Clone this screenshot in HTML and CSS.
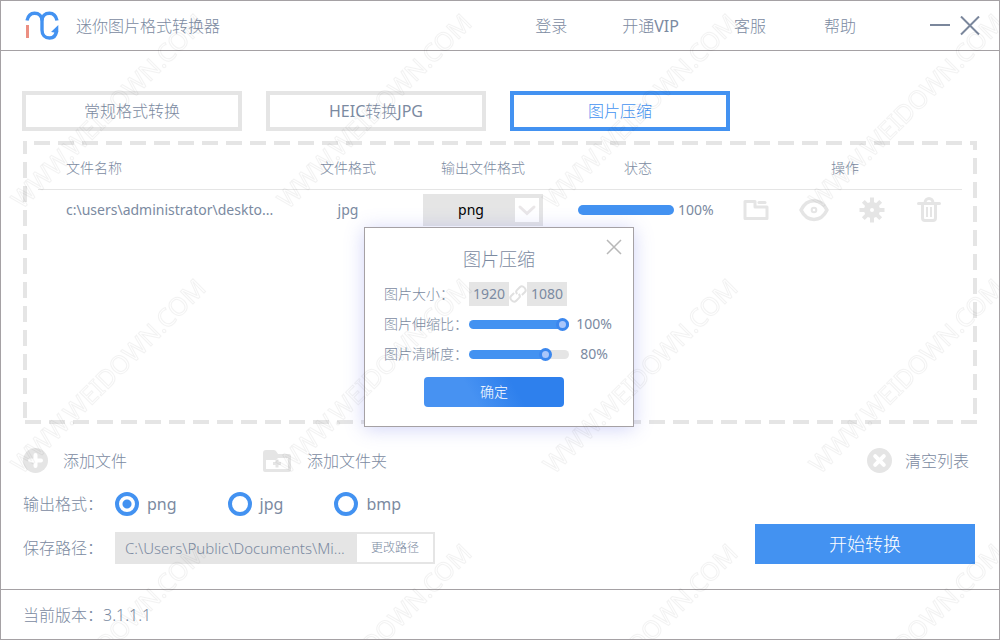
FILE: index.html
```html
<!DOCTYPE html>
<html lang="zh-CN">
<head>
<meta charset="utf-8">
<meta name="viewport" content="width=device-width, initial-scale=1">
<title>迷你图片格式转换器</title>
<link rel="stylesheet" href="styles.css">
</head>
<body>
<div class="window">
  <header class="titlebar">
    <svg class="logo" width="34" height="30" viewBox="0 0 34 30" aria-hidden="true">
      <path d="M2 9.500C3 5 6 2.200 9.500 2.200C14 2.200 17 5 17 9.500V19C17 24 20 27 24.500 27C28.500 27 31 24.500 31.500 20" fill="none" stroke="#4392f1" stroke-width="3.400"/>
      <path d="M17 9.500C17 5 20 2.200 24.500 2.200C28 2.200 31 5 32 9.500" fill="none" stroke="#4392f1" stroke-width="3.400"/>
      <path d="M26 21L33.300 14V21L31 24.500L29.500 21.500Z" fill="#4392f1"/>
      <path d="M1 14H4V27H1Z" fill="#ec8f82"/>
    </svg>
    <h1 class="app-name">迷你图片格式转换器</h1>
    <nav class="menu">
      <a href="#login">登录</a>
      <a href="#vip">开通<span class="latin">VIP</span></a>
      <a href="#service">客服</a>
      <a href="#help">帮助</a>
    </nav>
    <div class="window-buttons">
      <button type="button" aria-label="最小化"><svg width="20" height="20" viewBox="0 0 20 20"><path d="M0 9H20" stroke="#7b879c" stroke-width="2"/></svg></button>
      <button type="button" aria-label="关闭"><svg width="20" height="20" viewBox="0 0 20 20"><path d="M1 0.500L19 18.500M19 0.500L1 18.500" stroke="#7b879c" stroke-width="2"/></svg></button>
    </div>
  </header>

  <main class="content">
    <div class="tabs">
      <button type="button" class="tab">常规格式转换</button>
      <button type="button" class="tab"><span class="latin">HEIC</span>转换<span class="latin">JPG</span></button>
      <button type="button" class="tab tab-active">图片压缩</button>
    </div>

    <section class="dropzone">
      <table class="files">
        <colgroup><col class="col-name"><col class="col-format"><col class="col-output"><col class="col-status"><col></colgroup>
        <thead>
          <tr><th class="cell-name">文件名称</th><th>文件格式</th><th>输出文件格式</th><th class="head-status">状态</th><th>操作</th></tr>
        </thead>
        <tbody>
          <tr>
            <td class="cell-name">c:\users\administrator\deskto...</td>
            <td>jpg</td>
            <td>
              <div class="picker">
                <select aria-label="输出文件格式"><option>png</option><option>jpg</option><option>bmp</option></select>
                <svg class="picker-arrow" width="24" height="24" viewBox="0 0 24 24" aria-hidden="true"><path d="M5 9L12 15.500L19 9" fill="none" stroke="#eae7e8" stroke-width="3" stroke-linecap="round"/></svg>
              </div>
            </td>
            <td><div class="status"><span class="bar"></span><span>100%</span></div></td>
            <td>
              <div class="actions">
                <button type="button" aria-label="打开文件夹"><svg width="28" height="28" viewBox="0 0 28 28"><path d="M3 22.500V5.500H13V11H25V22.500Z" fill="none" stroke="#e5e5e5" stroke-width="3" stroke-linejoin="round"/><path d="M17 6.500H23" stroke="#e5e5e5" stroke-width="3" stroke-linecap="round"/></svg></button>
                <button type="button" aria-label="预览"><svg width="30" height="28" viewBox="0 0 30 28"><path d="M2 14C8 1.500 22 1.500 28 14C22 26.500 8 26.500 2 14Z" fill="none" stroke="#e5e5e5" stroke-width="3.500" stroke-linejoin="round"/><circle cx="15" cy="14" r="2.300" fill="none" stroke="#e5e5e5" stroke-width="2"/></svg></button>
                <button type="button" aria-label="设置"><svg width="28" height="28" viewBox="0 0 28 28"><g stroke="#e5e5e5" stroke-width="4"><path d="M14 1.500V10M14 18V26.500M1.500 14H10M18 14H26.500M5.300 5.300L11 11M17 17L22.700 22.700M22.700 5.300L17 11M11 17L5.300 22.700"/></g><circle cx="14" cy="14" r="5" fill="none" stroke="#e5e5e5" stroke-width="6"/></svg></button>
                <button type="button" aria-label="删除"><svg width="28" height="28" viewBox="0 0 28 28"><g fill="none" stroke="#e5e5e5" stroke-width="3"><path d="M3.500 7.500H24.500M10 7C10 1 18 1 18 7" stroke-linecap="round"/><path d="M7.500 8V22Q7.500 24.500 10 24.500H18Q20.500 24.500 20.500 22V8"/><path d="M12 11V21M16 11V21" stroke-width="2"/></g></svg></button>
              </div>
            </td>
          </tr>
        </tbody>
      </table>
    </section>

    <div class="file-buttons">
      <button type="button" class="file-button add-file">
        <svg width="25" height="25" viewBox="0 0 25 25" aria-hidden="true"><circle cx="12.500" cy="12.500" r="12.500" fill="#e5e5e5"/><path d="M12.500 7V18M7 12.500H18" stroke="#fff" stroke-width="4" stroke-linecap="round"/></svg>
        添加文件
      </button>
      <button type="button" class="file-button add-folder">
        <svg width="28" height="25" viewBox="0 0 28 25" aria-hidden="true"><path d="M0 5Q0 2 3 2H11Q13 2 14 4.500L15 6H26Q28 6 28 8V22Q28 24 26 24H2Q0 24 0 22Z" fill="#e5e5e5"/><path d="M3 12H13L15 10H25V21H3Z" fill="#fff"/><path d="M14 11.500V19.500M10 15.500H18" stroke="#e5e5e5" stroke-width="3"/></svg>
        添加文件夹
      </button>
      <button type="button" class="file-button clear-list">
        <svg width="25" height="25" viewBox="0 0 25 25" aria-hidden="true"><circle cx="12.500" cy="12.500" r="12.500" fill="#e5e5e5"/><path d="M8.200 8.200L16.800 16.800M16.800 8.200L8.200 16.800" stroke="#fff" stroke-width="4" stroke-linecap="round"/></svg>
        清空列表
      </button>
    </div>

    <div class="options">
      <div class="settings">
        <fieldset class="formats">
          <legend>输出格式：</legend>
          <label><input type="radio" name="format" checked>png</label>
          <label><input type="radio" name="format">jpg</label>
          <label><input type="radio" name="format">bmp</label>
        </fieldset>
        <div class="save-path">
          <label for="path">保存路径：</label>
          <div class="path-box">
            <input id="path" type="text" readonly value="C:\Users\Public\Documents\Mi...">
            <button type="button">更改路径</button>
          </div>
        </div>
      </div>
      <button type="button" class="start">开始转换</button>
    </div>
  </main>

  <footer class="footer">当前版本：3.1.1.1</footer>

  <section class="dialog" role="dialog" aria-labelledby="dialog-title">
    <button type="button" class="dialog-close" aria-label="关闭"><svg width="16" height="16" viewBox="0 0 16 16"><path d="M1 1L15 15M15 1L1 15" stroke="#b8b8b8" stroke-width="1.500"/></svg></button>
    <h2 id="dialog-title">图片压缩</h2>
    <div class="field">
      <label for="width">图片大小：</label>
      <input class="size" id="width" type="text" value="1920">
      <svg width="18" height="18" viewBox="0 0 18 18" aria-hidden="true"><g fill="none" stroke="#e0e0e0" stroke-width="2" transform="rotate(-45 9 9)"><path d="M7 5.500H3Q0 5.500 0 9Q0 12.500 3 12.500H7Q9.500 12.500 9.500 9.500"/><path d="M11 12.500H15Q18 12.500 18 9Q18 5.500 15 5.500H11Q8.500 5.500 8.500 8.500"/></g></svg>
      <input class="size" type="text" value="1080" aria-label="图片高度">
    </div>
    <div class="field">
      <label for="scale">图片伸缩比：</label>
      <input class="slider" id="scale" type="range" value="100" style="--value:100%">
      <output for="scale">100%</output>
    </div>
    <div class="field">
      <label for="clarity">图片清晰度：</label>
      <input class="slider" id="clarity" type="range" value="80" style="--value:80%">
      <output for="clarity">80%</output>
    </div>
    <button type="button" class="confirm">确定</button>
  </section>

  <svg class="watermark" aria-hidden="true">
    <defs>
      <pattern id="mark" width="266" height="265" patternUnits="userSpaceOnUse">
        <text x="21" y="209" transform="rotate(-45 21 209)">WWW.WEIDOWN.COM</text>
      </pattern>
    </defs>
    <rect width="100%" height="100%" fill="url(#mark)"/>
  </svg>
</div>
</body>
</html>
```
FILE: styles.css
```css
:root {
  --text: #7b8aa1;
  --blue: #4392f1;
  --grey: #e5e5e5;
  --line: #a5a1a4;
}

* { box-sizing: border-box; }

body {
  margin: 0;
  background: #fff;
  color: var(--text);
  font: 300 16px/24px "Noto Sans", "Noto Sans CJK SC", sans-serif;
}

button, input, select {
  font: inherit;
  color: inherit;
  margin: 0;
  padding: 0;
  border: 0;
  border-radius: 0;
  background: none;
}

svg { display: block; flex: none; }

.latin { font-weight: 400; }

.window {
  position: relative;
  display: flex;
  flex-direction: column;
  min-height: 100vh;
  border: 1px solid var(--line);
  overflow: hidden;
}

.titlebar {
  display: flex;
  align-items: center;
  height: 50px;
  padding: 0 19px 0 24px;
  border-bottom: 1px solid var(--line);
}

.app-name {
  margin: 0 auto 0 17px;
  font-size: 16px;
  font-weight: 300;
}

.menu { display: flex; gap: 55px; margin-right: 74px; }
.menu a { color: inherit; text-decoration: none; }
.menu a:last-child { margin-left: 3px; }

.window-buttons { display: flex; gap: 10px; }

.content {
  flex: 1;
  display: flex;
  flex-direction: column;
  padding: 40px 22px 25px 21px;
}

.tabs { display: flex; gap: 24px; }

.tab {
  width: 220px;
  height: 40px;
  border: 4px solid var(--grey);
}

.tab-active { border-color: var(--blue); color: var(--blue); }

.dropzone {
  flex: 1;
  margin: 10px 0 0 1px;
  padding: 6px 15px;
  background:
    linear-gradient(90deg, var(--grey) 66%, transparent 0) 11px 0 / 24px 4px repeat-x,
    linear-gradient(90deg, var(--grey) 66%, transparent 0) 2px 100% / 24px 4px repeat-x,
    linear-gradient(180deg, var(--grey) 66%, transparent 0) 0 -3px / 4px 24px repeat-y,
    linear-gradient(180deg, var(--grey) 66%, transparent 0) 100% -7px / 4px 24px repeat-y;
}

.files {
  width: 100%;
  table-layout: fixed;
  border-collapse: collapse;
  font-size: 14px;
  line-height: 20px;
}

.files th, .files td { padding: 0; text-align: center; }
.files th { height: 42px; border-bottom: 1px solid var(--grey); font-weight: 300; }
.files td { height: 42px; font-weight: 400; }
.files .cell-name { padding-left: 28px; text-align: left; }
.files .head-status { padding-right: 12px; }

.col-name { width: 252px; }
.col-format { width: 116px; }
.col-output { width: 154px; }
.col-status { width: 168px; }

.picker {
  position: relative;
  width: 120px;
  margin: 0 auto;
}

.picker select {
  display: block;
  appearance: none;
  width: 100%;
  height: 32px;
  padding: 0 24px 0 0;
  background: var(--grey);
  color: #000;
  text-align: center;
  text-align-last: center;
}

.picker-arrow {
  position: absolute;
  top: 4px;
  right: 4px;
  background: #fff;
  pointer-events: none;
}

.status { display: flex; align-items: center; gap: 4px; padding-left: 18px; }
.bar { width: 96px; height: 10px; border-radius: 5px; background: var(--blue); }
.actions { display: flex; justify-content: center; gap: 29px; padding-right: 5px; }

.file-buttons { display: flex; padding: 24px 8px 0 1px; }
.file-button { display: flex; align-items: center; }
.add-file { gap: 15px; }
.add-folder { gap: 16px; margin-left: 136px; }
.clear-list { gap: 13px; margin-left: auto; }

.options {
  display: flex;
  justify-content: space-between;
  align-items: flex-end;
  padding: 19px 2px 0 1px;
}

.settings { display: flex; flex-direction: column; gap: 16px; }

.formats {
  display: flex;
  align-items: center;
  margin: 0;
  padding: 0;
  border: 0;
}

.formats legend { float: left; width: 92px; padding: 0; }

.formats label {
  display: flex;
  align-items: center;
  gap: 8px;
  margin-right: 51px;
  font-weight: 400;
}

.formats input {
  appearance: none;
  width: 24px;
  height: 24px;
  border: 4px solid var(--blue);
  border-radius: 50%;
}

.formats input:checked { background: radial-gradient(circle, var(--blue) 4px, transparent 5px); }

.save-path { display: flex; align-items: center; }
.save-path > label { width: 92px; }

.path-box {
  display: flex;
  width: 320px;
  height: 32px;
  padding: 2px;
  background: var(--grey);
}

.path-box input { flex: 1; min-width: 0; padding-left: 8px; font-size: 15px; }
.path-box button { width: 76px; background: #fff; font-size: 12px; }

.start {
  width: 220px;
  height: 40px;
  background: var(--blue);
  color: #fff;
  font-size: 18px;
}

.footer {
  height: 50px;
  padding: 13px 22px;
  border-top: 1px solid var(--line);
}

.dialog {
  position: absolute;
  top: 226px;
  left: 50%;
  display: flex;
  flex-direction: column;
  width: 270px;
  margin-left: -136px;
  padding: 19px;
  border: 1px solid var(--line);
  background: #fff;
  box-shadow: 0 2px 18px rgba(90, 100, 230, 0.28);
  font-size: 14px;
}

.dialog h2 {
  margin: 0 0 8px;
  font-size: 18px;
  line-height: 24px;
  font-weight: 300;
  text-align: center;
}

.dialog-close { position: absolute; top: 11px; right: 11px; }

.field { display: flex; align-items: center; height: 30px; }
.field label { flex: none; width: 85px; white-space: nowrap; }
.field output { flex: none; width: 50px; font-weight: 400; text-align: center; }

.size { width: 40px; height: 24px; background: var(--grey); font-weight: 400; text-align: center; }

.slider {
  flex: none;
  appearance: none;
  width: 100px;
  height: 9px;
  border-radius: 5px;
  background: linear-gradient(var(--blue), var(--blue)) 0 0 / var(--value) 100% no-repeat var(--grey);
}

.slider::-webkit-slider-thumb {
  appearance: none;
  width: 13px;
  height: 13px;
  border: 3px solid #3b87ee;
  border-radius: 50%;
  background: #a9c6fb;
}

.confirm {
  width: 140px;
  height: 30px;
  margin: 8px 0 0 40px;
  border-radius: 4px;
  background: linear-gradient(60deg, #4792f2 35%, #2e80ed 65%);
  color: #fff;
}

.watermark {
  position: absolute;
  inset: 0;
  width: 100%;
  height: 100%;
  pointer-events: none;
}

.watermark text {
  font: 400 25px "Noto Sans", sans-serif;
  fill: none;
  stroke: #000;
  stroke-opacity: 0.05;
  stroke-width: 1px;
}
```
